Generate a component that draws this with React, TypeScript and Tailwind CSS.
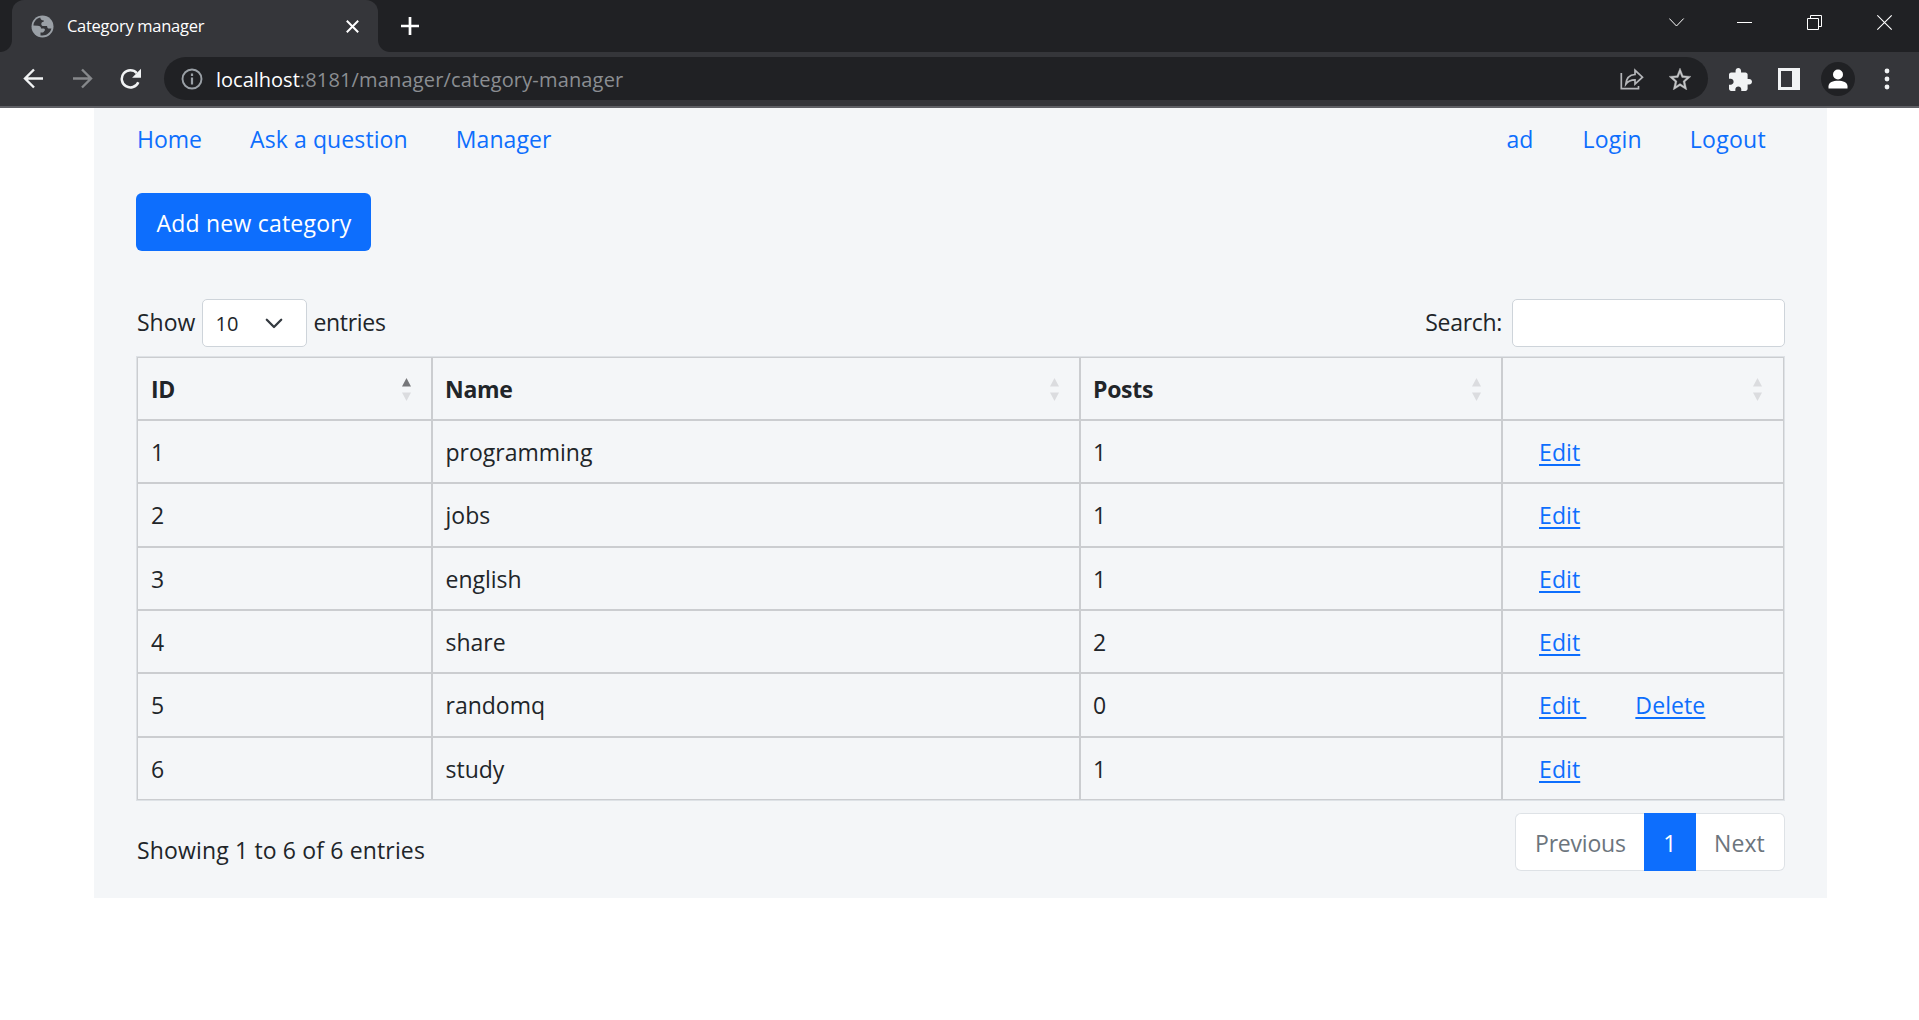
import React from "react";

type Category = { id: number; name: string; posts: number; removable?: boolean };

const categories: Category[] = [
  { id: 1, name: "programming", posts: 1 },
  { id: 2, name: "jobs", posts: 1 },
  { id: 3, name: "english", posts: 1 },
  { id: 4, name: "share", posts: 2 },
  { id: 5, name: "randomq", posts: 0, removable: true },
  { id: 6, name: "study", posts: 1 },
];

const rowHeights = ["h-[63px]", "h-[64px]", "h-[63px]", "h-[63px]", "h-[64px]", "h-[61px]"];

function TabStrip() {
  return (
    <div className="flex h-[52px] bg-[#202124]">
      <div className="relative ml-3 flex h-full w-[366px] items-center rounded-t-[12px] bg-[#35363a] pl-[19px] pr-[18px]">
        <span className="absolute -left-3 bottom-0 size-3 bg-[radial-gradient(circle_at_0_0,#202124_11.5px,#35363a_12.5px)]" />
        <span className="absolute -right-3 bottom-0 size-3 bg-[radial-gradient(circle_at_100%_0,#202124_11.5px,#35363a_12.5px)]" />
        <svg className="size-[23px]" viewBox="0 0 23 23">
          <circle cx="11.5" cy="11.5" r="11" fill="#9aa0a6" />
          <path
            d="M9.200 2.600C5.500 3.500 2.800 6.600 2.400 10.400l4.400.3c2 .1 3.300 1.100 3.200 2.700l2.600.1c1.300.2 1.800 1.400 1 2.300l-1 1.100c-.3.4-.9.6-1.400.6H9.500v2.900c5 1 9.700-1.900 10.900-6.800l-2.500-.1c-.8 0-1.200-.4-1.500-1.100l-.4-1.300h-3.500c-1.400 0-2.300-1-2.200-2.200.1-1.400 1-2 2.300-2.100l.3-1.200c-1.900.1-3.400-.8-3.700-3z"
            fill="#35363a"
          />
        </svg>
        <span className="ml-[13px] text-[16.5px] leading-6 tracking-[-0.28px] text-white">Category manager</span>
        <svg className="ml-auto size-[15px]" viewBox="0 0 15 15" fill="none" stroke="#fff" strokeWidth="2">
          <path d="M1.800 1.800l11.400 11.400M13.200 1.800L1.800 13.200" />
        </svg>
      </div>
      <svg className="ml-[22px] mt-4 size-5" viewBox="0 0 20 20" fill="none" stroke="#fff" strokeWidth="2.700">
        <path d="M10 1v18M1 10h18" />
      </svg>
      <div className="ml-auto flex items-start pr-[26px] pt-[14px]">
        <svg className="h-[17px] w-4" viewBox="0 0 16 17" fill="none" stroke="#fff" strokeWidth="1">
          <path d="M.3 4.500L7.500 12l7.200-7.500" />
        </svg>
        <svg className="ml-[52px] h-[17px] w-4" viewBox="0 0 16 17" fill="none" stroke="#fff">
          <path d="M0 8.500h15" />
        </svg>
        <svg className="ml-[54px] h-[17px] w-4" viewBox="0 0 16 17" fill="none" stroke="#fff">
          <path d="M.5 4.500h11v11H.5zM3.500 4.500v-3h11v11h-3" />
        </svg>
        <svg className="ml-[54px] h-[17px] w-4" viewBox="0 0 16 17" fill="none" stroke="#fff" strokeWidth="1.200">
          <path d="M.3 1.300l14.400 14.400M14.700 1.300L.3 15.700" />
        </svg>
      </div>
    </div>
  );
}

function Toolbar() {
  return (
    <div className="flex h-[56px] items-center border-b-2 border-[#5f6065] bg-[#35363a] pl-[23px] pr-[29px]">
      <svg className="mb-px size-[21px]" viewBox="0 0 21 21" fill="none" stroke="#f1f3f4" strokeWidth="2.400">
        <path d="M20 10.500H2.500M11 1.500l-9 9 9 9" />
      </svg>
      <svg className="mb-px ml-7 size-[21px]" viewBox="0 0 21 21" fill="none" stroke="#86888b" strokeWidth="2.400">
        <path d="M1 10.500h17.500M10 1.500l9 9-9 9" />
      </svg>
      <svg className="ml-[27px] size-[22px]" viewBox="0 0 22 22">
        <path d="M18.300 14.200a8.600 8.600 0 1 1-1.500-9.100" fill="none" stroke="#f1f3f4" strokeWidth="2.500" />
        <path d="M21 .8v8.900h-8.900z" fill="#f1f3f4" />
      </svg>
      <div className="mt-[-1px] ml-[22px] flex h-[43px] w-[1544px] items-center rounded-full bg-[#202124] pl-[17px] pr-[17px]">
        <svg className="size-[22px]" viewBox="0 0 22 22">
          <circle cx="11" cy="11" r="9.500" fill="none" stroke="#9aa0a6" strokeWidth="1.900" />
          <path d="M9.900 5.600h2.200v2.300H9.900zM9.900 9.500h2.200v6.900H9.900z" fill="#9aa0a6" />
        </svg>
        <span className="ml-[13px] pt-[2px] text-[20px] leading-7 tracking-[0.16px] text-[#8b8e92]">
          <span className="tracking-[0px] text-white">localhost</span>:8181/manager/category-manager
        </span>
        <svg className="ml-auto size-6" viewBox="0 0 24 24" fill="none" stroke="#b4b6b9" strokeWidth="1.700">
          <path d="M1.300 6v15.700h17.200V19" />
          <path d="M5.800 17.200c.5-6 4-9.400 9.200-9.700V3.300l7.500 6.900-7.500 6.900v-4.200c-4.300 0-7 1.200-9.200 4.300z" />
        </svg>
        <svg className="ml-[25px] size-[22px]" viewBox="2 2 20 19" preserveAspectRatio="none">
          <path
            fill="#c4c5c7"
            stroke="#c4c5c7"
            strokeWidth="0.300"
            d="M22 9.240l-7.190-.62L12 2 9.190 8.630 2 9.240l5.460 4.730L5.820 21 12 17.270 18.180 21l-1.630-7.030L22 9.240zM12 15.400l-3.760 2.270 1-4.280-3.320-2.880 4.380-.38L12 6.100l1.710 4.040 4.380.38-3.320 2.880 1 4.280L12 15.400z"
          />
        </svg>
      </div>
      <svg className="ml-[21px] size-[23px]" viewBox="2 1 21 21">
        <path
          fill="#f1f3f4"
          d="M20.500 11H19V7c0-1.100-.9-2-2-2h-4V3.500C13 2.120 11.880 1 10.500 1S8 2.120 8 3.500V5H4c-1.100 0-1.990.9-1.990 2v3.800H3.500c1.490 0 2.700 1.210 2.700 2.700s-1.210 2.700-2.700 2.700H2V20c0 1.100.9 2 2 2h3.800v-1.500c0-1.490 1.210-2.700 2.700-2.700 1.490 0 2.700 1.210 2.700 2.700V22H17c1.100 0 2-.9 2-2v-4h1.500c1.380 0 2.500-1.120 2.500-2.500S21.880 11 20.500 11z"
        />
      </svg>
      <svg className="ml-[26px] size-[22px]" viewBox="0 0 22 22">
        <path d="M0 0h22v22H0z" fill="#f1f3f4" />
        <path d="M3 3h11v16H3z" fill="#35363a" />
      </svg>
      <svg className="ml-[21px] size-[34px]" viewBox="0 0 34 34">
        <circle cx="17" cy="17" r="17" fill="#202124" />
        <circle cx="17" cy="12.500" r="5" fill="#fff" />
        <path d="M7.500 26.500v-2.300c0-3.600 4.500-5.400 9.500-5.400s9.500 1.800 9.500 5.400v2.300z" fill="#fff" />
      </svg>
      <svg className="ml-auto h-[22px] w-[6px]" viewBox="0 0 6 22" fill="#f1f3f4">
        <circle cx="3" cy="3" r="2.400" />
        <circle cx="3" cy="11" r="2.400" />
        <circle cx="3" cy="19" r="2.400" />
      </svg>
    </div>
  );
}

function SortArrows({ ascending }: { ascending?: boolean }) {
  return (
    <svg className="ml-auto mt-px h-[23px] w-[9px]" viewBox="0 0 9 23">
      <path d="M4.500 0L9 8.500H0z" fill={ascending ? "#76777a" : "#dbdcdf"} />
      <path d="M0 14.500h9L4.500 23z" fill="#dbdcdf" />
    </svg>
  );
}

function HeaderCell({ label, ascending, last }: { label: string; ascending?: boolean; last?: boolean }) {
  return (
    <div
      className={
        "flex items-center border-b-2 border-[#cbcdd0] font-bold tracking-[-0.3px] " +
        (ascending ? "pl-[13px] " : "pl-3 ") +
        (last ? "pr-[21px]" : "border-r-2 pr-[20px]")
      }
    >
      <span>{label}</span>
      <SortArrows ascending={ascending} />
    </div>
  );
}

function CategoryTable() {
  const columns = "grid grid-cols-[295px_648px_422px_280px]";
  return (
    <div className="mt-[9px] border border-[#dee2e6]">
      <div className="border border-[#cbcdd0]">
        <div className={columns + " h-[63px]"}>
          <HeaderCell label="ID" ascending />
          <HeaderCell label="Name" />
          <HeaderCell label="Posts" />
          <HeaderCell label="" last />
        </div>
        {categories.map((c, i) => {
          const line = i < categories.length - 1 ? "border-b-2 " : "";
          const cell = "flex items-center border-[#cbcdd0] " + line;
          return (
            <div key={c.id} className={columns + " " + rowHeights[i]}>
              <div className={cell + "border-r-2 pl-[13px]"}>{c.id}</div>
              <div className={cell + "border-r-2 pl-[12.5px] tracking-[0px]"}>{c.name}</div>
              <div className={cell + "border-r-2 pl-3"}>{c.posts}</div>
              <div className={cell + "pl-3"}>
                <div className="ml-6 whitespace-pre text-[#0d6efd]">
                  <a className="underline decoration-2 underline-offset-[3px]">{c.removable ? "Edit " : "Edit"}</a>
                  {c.removable && <a className="ml-[49px] underline decoration-2 underline-offset-[3px]">Delete</a>}
                </div>
              </div>
            </div>
          );
        })}
      </div>
    </div>
  );
}

export default function App() {
  return (
    <div className="h-[1020px] w-[1919px] overflow-hidden bg-white font-['Open_Sans',sans-serif]">
      <TabStrip />
      <Toolbar />
      <main className="ml-[94px] h-[790px] w-[1733px] bg-[#f4f6f8] px-[42px] text-[23px] leading-9 tracking-[0.1px] text-[#212529]">
        <nav className="flex h-[62px] items-center text-[#0d6efd]">
          <a className="ml-px tracking-[0px]">Home</a>
          <a className="ml-[48px]">Ask a question</a>
          <a className="ml-[48px]">Manager</a>
          <a className="ml-auto">ad</a>
          <a className="ml-[49px] tracking-[0.2px]">Login</a>
          <a className="ml-[48px] mr-[19px] tracking-[0.3px]">Logout</a>
        </nav>
        <button className="mt-[23px] flex h-[58px] w-[235px] items-center justify-center rounded-[6px] bg-[#0d6efd] pl-px pt-[2px] tracking-[0.22px] text-white">
          Add new category
        </button>
        <div className="mt-12 flex h-12 items-center">
          <span className="ml-px pb-[2px] tracking-[0px]">Show</span>
          <div className="ml-[7px] flex h-12 w-[105px] items-center justify-between rounded-[5px] border border-[#ced4da] bg-white pl-[12px] pr-[23px] text-[20px]">
            <span className="pt-px">10</span>
            <svg className="h-[11px] w-[18px]" viewBox="0 0 18 11" fill="none" stroke="#343a40" strokeWidth="2.300" strokeLinecap="round" strokeLinejoin="round">
              <path d="M1.800 1.800L9 9l7.200-7.200" />
            </svg>
          </div>
          <span className="ml-[6px] pb-[2px] tracking-[-0.3px]">entries</span>
          <span className="ml-auto pb-[2px] tracking-[-0.3px]">Search:</span>
          <input className="ml-[10px] h-12 w-[273px] rounded-[5px] border border-[#ced4da] bg-white" />
        </div>
        <CategoryTable />
        <div className="flex items-start justify-between pt-3">
          <span className="ml-px pt-[19px] tracking-[0.15px]">Showing 1 to 6 of 6 entries</span>
          <div className="flex h-[58px] w-[270px] text-[#6c757d]">
            <span className="flex flex-1 items-center rounded-l-[6px] border border-r-0 border-[#dee2e6] bg-white pl-[19px] pt-[2px] tracking-[-0.2px]">Previous</span>
            <span className="flex w-[52px] items-center justify-center bg-[#0d6efd] pt-[2px] text-white">1</span>
            <span className="flex w-[89px] items-center rounded-r-[6px] border border-l-0 border-[#dee2e6] bg-white pl-[18px] pt-[2px]">Next</span>
          </div>
        </div>
      </main>
    </div>
  );
}
